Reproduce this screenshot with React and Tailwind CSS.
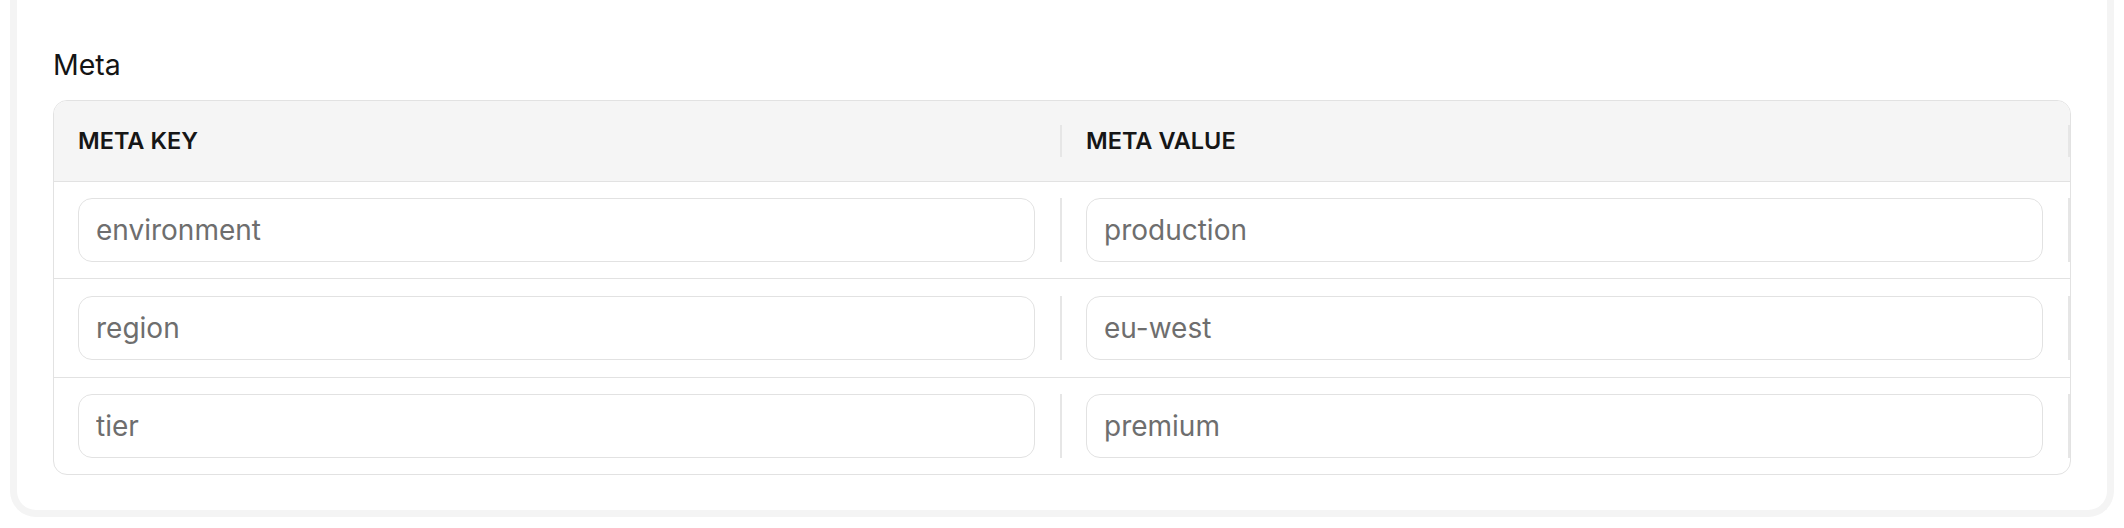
import React from 'react';

const rows = [
  { key: 'environment', value: 'production', h: 'h-[97px]' },
  { key: 'region', value: 'eu-west', h: 'h-[99px]' },
  { key: 'tier', value: 'premium', h: 'h-[96px]' },
];

const Divider = ({ className = '' }) => (
  <div className={`w-[2px] shrink-0 bg-[#e6e6e6] ${className}`} />
);

const MetaInput = ({ value }) => (
  <input
    readOnly
    value={value}
    className="w-full h-[64px] rounded-[14px] border-[1.5px] border-[#e2e2e2] bg-white pl-[17px] text-[28px] text-[#6e6e6e] outline-none"
  />
);

export default function App() {
  return (
    <div className="min-h-screen bg-white px-[10px] pb-[11px]" style={{ fontFamily: 'Inter, "Noto Sans", sans-serif' }}>
      <div className="rounded-b-[26px] border-[7px] border-t-0 border-[#f4f4f4] bg-white px-[36px] pt-[46px] pb-[35px]">
        <h2 className="text-[28.5px] leading-[37px] text-[#141414]">Meta</h2>

        <div className="mt-[17px] overflow-hidden rounded-[14px] border border-[#e2e2e2]">
          {/* header */}
          <div className="flex h-[81px] border-b border-[#e2e2e2] bg-[#f5f5f5]">
            <div className="flex flex-1 items-center">
              <div className="flex-1 pl-[24px] text-[23.5px] font-semibold text-[#161616]">META KEY</div>
              <Divider className="h-[32px]" />
            </div>
            <div className="flex flex-1 items-center">
              <div className="flex-1 pl-[24px] text-[23.5px] font-semibold text-[#161616]">META VALUE</div>
              <Divider className="h-[32px]" />
            </div>
          </div>

          {rows.map((row, i) => (
            <div
              key={row.key}
              className={`flex ${row.h} items-center ${i < rows.length - 1 ? 'border-b border-[#e2e2e2]' : ''}`}
            >
              <div className="flex flex-1 items-center">
                <div className="flex-1 pl-[24px] pr-[25px]">
                  <MetaInput value={row.key} />
                </div>
                <Divider className="h-[64px]" />
              </div>
              <div className="flex flex-1 items-center">
                <div className="flex-1 pl-[24px] pr-[25px]">
                  <MetaInput value={row.value} />
                </div>
                <Divider className="h-[64px]" />
              </div>
            </div>
          ))}
        </div>
      </div>
    </div>
  );
}
